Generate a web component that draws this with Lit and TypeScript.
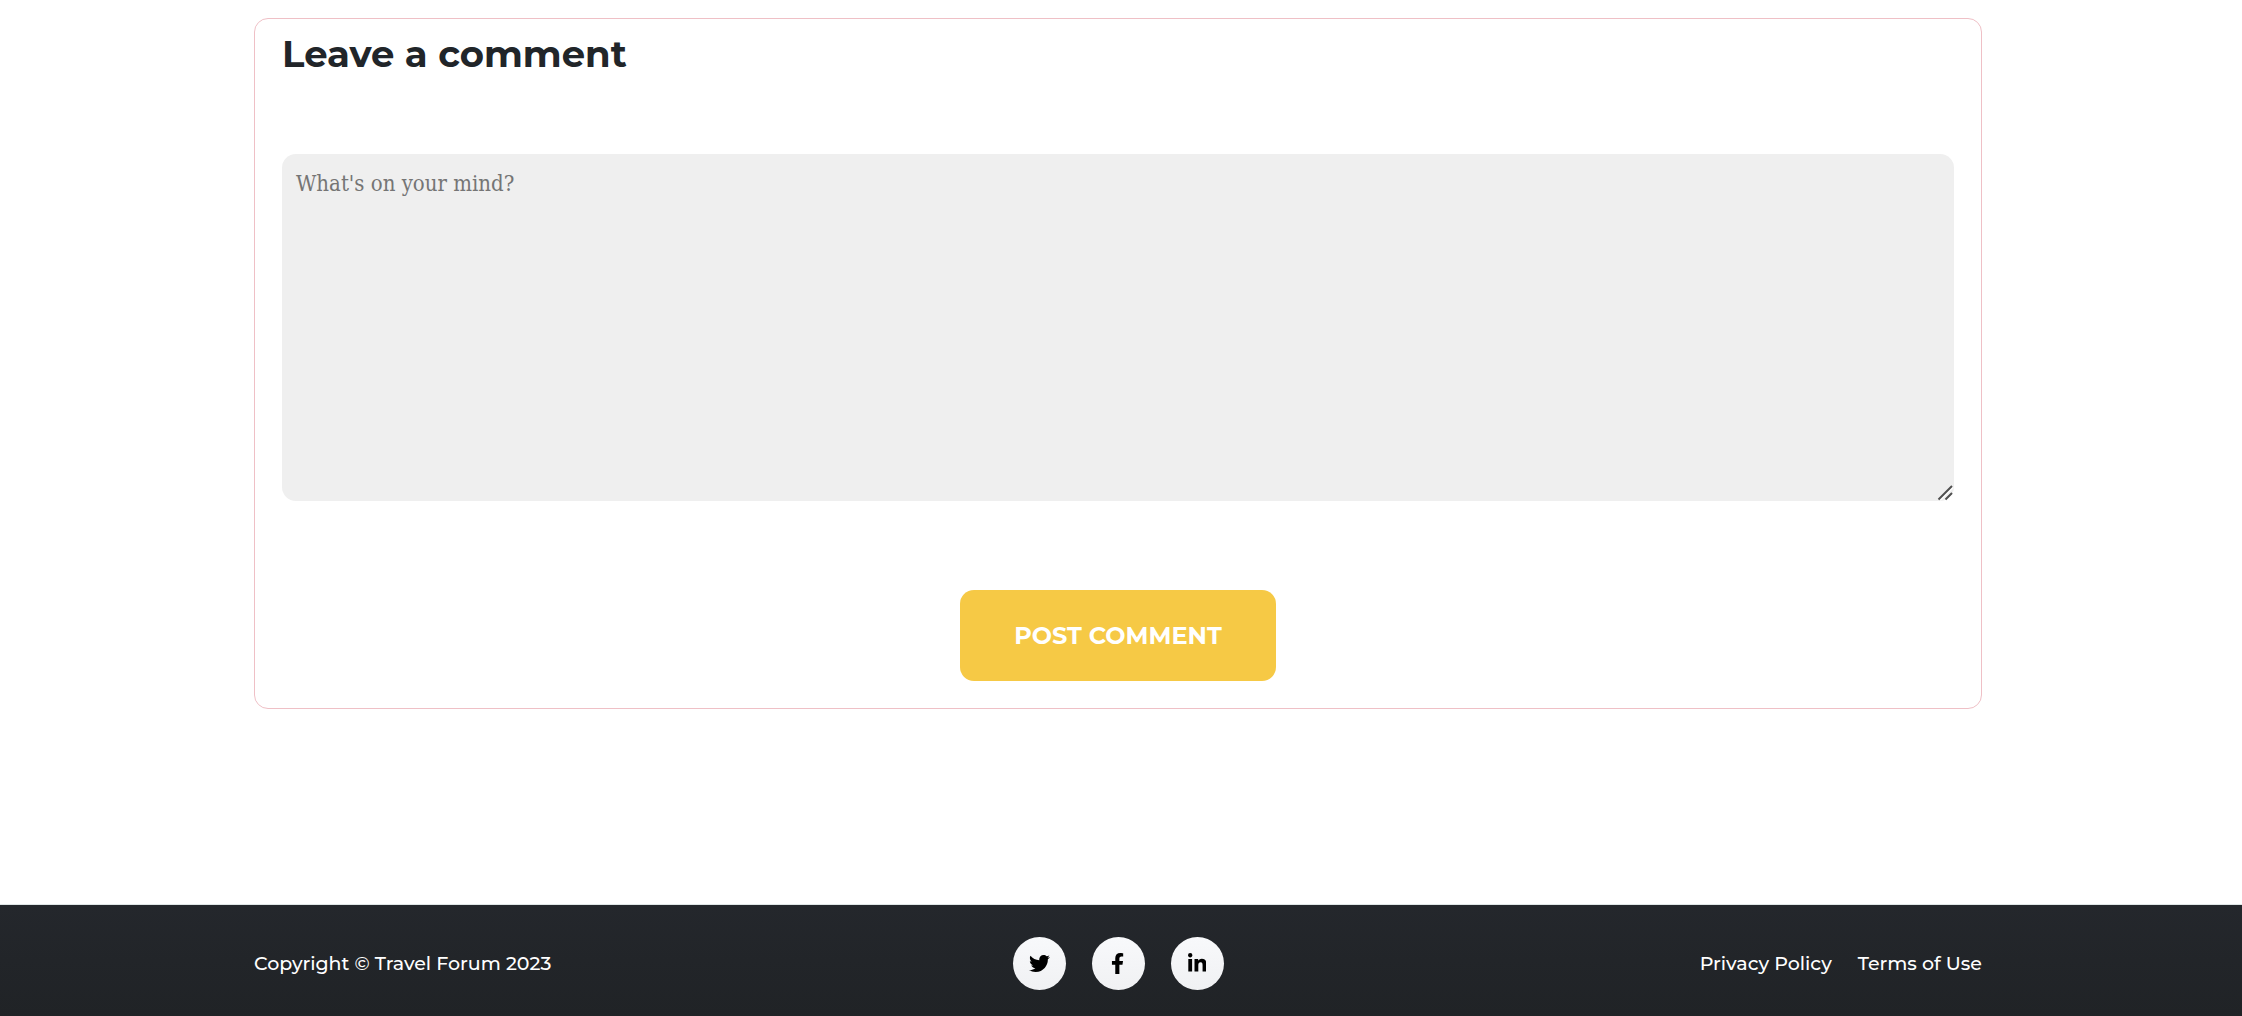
import { LitElement, html, css, svg } from "lit";
import { customElement } from "lit/decorators.js";

const twitter = svg`<path d="M459.37 151.716c.325 4.548.325 9.097.325 13.645 0 138.72-105.583 298.558-298.558 298.558-59.452 0-114.68-17.219-161.137-47.106 8.447.974 16.568 1.299 25.34 1.299 49.055 0 94.213-16.568 130.274-44.832-46.132-.975-84.792-31.188-98.112-72.772 6.498.974 12.995 1.624 19.818 1.624 9.421 0 18.843-1.3 27.614-3.573-48.081-9.747-84.143-51.98-84.143-102.985v-1.299c13.969 7.797 30.214 12.67 47.431 13.319-28.264-18.843-46.781-51.005-46.781-87.391 0-19.492 5.197-37.36 14.294-52.954 51.655 63.675 129.3 105.258 216.365 109.807-1.624-7.797-2.599-15.918-2.599-24.04 0-57.828 46.782-104.934 104.934-104.934 30.213 0 57.502 12.67 76.67 33.137 23.715-4.548 46.456-13.32 66.599-25.34-7.798 24.366-24.366 44.833-46.132 57.827 21.117-2.273 41.584-8.122 60.426-16.243-14.292 20.791-32.161 39.308-52.628 54.253z"/>`;
const facebook = svg`<path d="M279.14 288l14.22-92.66h-88.91v-60.13c0-25.35 12.42-50.06 52.24-50.06h40.42V6.26S260.43 0 225.36 0c-73.22 0-121.08 44.38-121.08 124.72v70.62H22.89V288h81.39v224h100.17V288z"/>`;
const linkedin = svg`<path d="M100.28 448H7.4V148.9h92.88zM53.79 108.1C24.09 108.1 0 83.5 0 53.8a53.79 53.79 0 0 1 107.58 0c0 29.7-24.1 54.3-53.79 54.3zM447.9 448h-92.68V302.4c0-34.7-.7-79.2-48.29-79.2-48.29 0-55.69 37.7-55.69 76.7V448h-92.78V148.9h89.08v40.8h1.3c12.4-23.5 42.69-48.3 87.88-48.3 94 0 111.28 61.9 111.28 142.3V448z"/>`;

const networks = [
  { name: "Twitter", box: "0 0 512 512", icon: twitter },
  { name: "Facebook", box: "0 0 320 512", icon: facebook },
  { name: "LinkedIn", box: "0 0 448 512", icon: linkedin },
];

@customElement("app-root")
export class AppRoot extends LitElement {
  static styles = css`
    :host {
      display: flex;
      flex-direction: column;
      min-height: 100vh;
      background: #fff;
      color: #212529;
      font-family: Montserrat, Inter, sans-serif;
    }
    * {
      box-sizing: border-box;
    }
    .main,
    .footer {
      padding: 0 260px 0 254px;
    }
    .main {
      padding-top: 18px;
      padding-bottom: 195px;
    }
    .card {
      display: flex;
      flex-direction: column;
      padding: 12px 27px 27px;
      border: 1px solid #efc0c6;
      border-radius: 14px;
    }
    .title {
      margin: 0 0 77px;
      font-size: 37px;
      line-height: 46px;
      font-weight: 700;
    }
    .field {
      position: relative;
    }
    .message {
      display: block;
      width: 100%;
      height: 347px;
      padding: 14px;
      border: 0;
      border-radius: 14px;
      background: #efefef;
      color: #212529;
      font-family: "Roboto Slab", "DejaVu Serif Condensed", "DejaVu Serif", serif;
      font-size: 22px;
      line-height: 31px;
      resize: vertical;
    }
    .message::placeholder {
      color: #757575;
      opacity: 1;
    }
    .message::-webkit-resizer {
      background: transparent;
    }
    .grip {
      position: absolute;
      right: 0;
      bottom: 0;
      width: 18px;
      height: 18px;
      fill: none;
      stroke: #505050;
      stroke-width: 2;
      pointer-events: none;
    }
    .grip .shine {
      stroke: #fff;
    }
    .post {
      align-self: center;
      margin-top: 89px;
      padding: 30px 54px;
      border: 0;
      border-radius: 14px;
      background: #f6c945;
      color: #fff;
      font-family: inherit;
      font-size: 24px;
      line-height: 31px;
      font-weight: 700;
      text-transform: uppercase;
    }
    .footer {
      flex: 1;
      display: grid;
      grid-template-columns: 1fr auto 1fr;
      align-items: start;
      padding-top: 32px;
      background: linear-gradient(#24272c, #202326);
      border-top: 1px solid #dfe6e6;
      color: #fff;
      font-size: 19px;
      line-height: 53px;
      font-weight: 500;
    }
    .copy {
      margin: 0;
    }
    .social,
    .legal {
      display: flex;
      gap: 26px;
    }
    .legal {
      justify-content: flex-end;
    }
    .link {
      color: inherit;
      text-decoration: none;
    }
    .badge {
      display: flex;
      align-items: center;
      justify-content: center;
      width: 53px;
      height: 53px;
      border-radius: 50%;
      background: linear-gradient(#f8f9fb, #f0f1f3);
      color: #000;
    }
    .icon {
      height: 21px;
      fill: currentColor;
    }
  `;

  render() {
    return html`
      <main class="main">
        <form class="card" @submit=${(e: Event) => e.preventDefault()}>
          <h2 class="title" id="title">Leave a comment</h2>
          <div class="field">
            <textarea class="message" aria-labelledby="title" placeholder="What's on your mind?"></textarea>
            <svg class="grip" viewBox="0 0 18 18" aria-hidden="true">
              <path class="shine" d="M4 17 17 4M11 17l6-6" />
              <path d="M2.500 16.500 16 3M9.500 16.500 16 10" />
            </svg>
          </div>
          <button class="post" type="submit">Post comment</button>
        </form>
      </main>
      <footer class="footer">
        <p class="copy">Copyright © Travel Forum 2023</p>
        <nav class="social" aria-label="Social networks">
          ${networks.map(
            (n) => html`<a class="badge" href="#" aria-label=${n.name}>
              <svg class="icon" viewBox=${n.box} aria-hidden="true">${n.icon}</svg>
            </a>`,
          )}
        </nav>
        <nav class="legal" aria-label="Legal">
          <a class="link" href="#">Privacy Policy</a>
          <a class="link" href="#">Terms of Use</a>
        </nav>
      </footer>
    `;
  }
}
